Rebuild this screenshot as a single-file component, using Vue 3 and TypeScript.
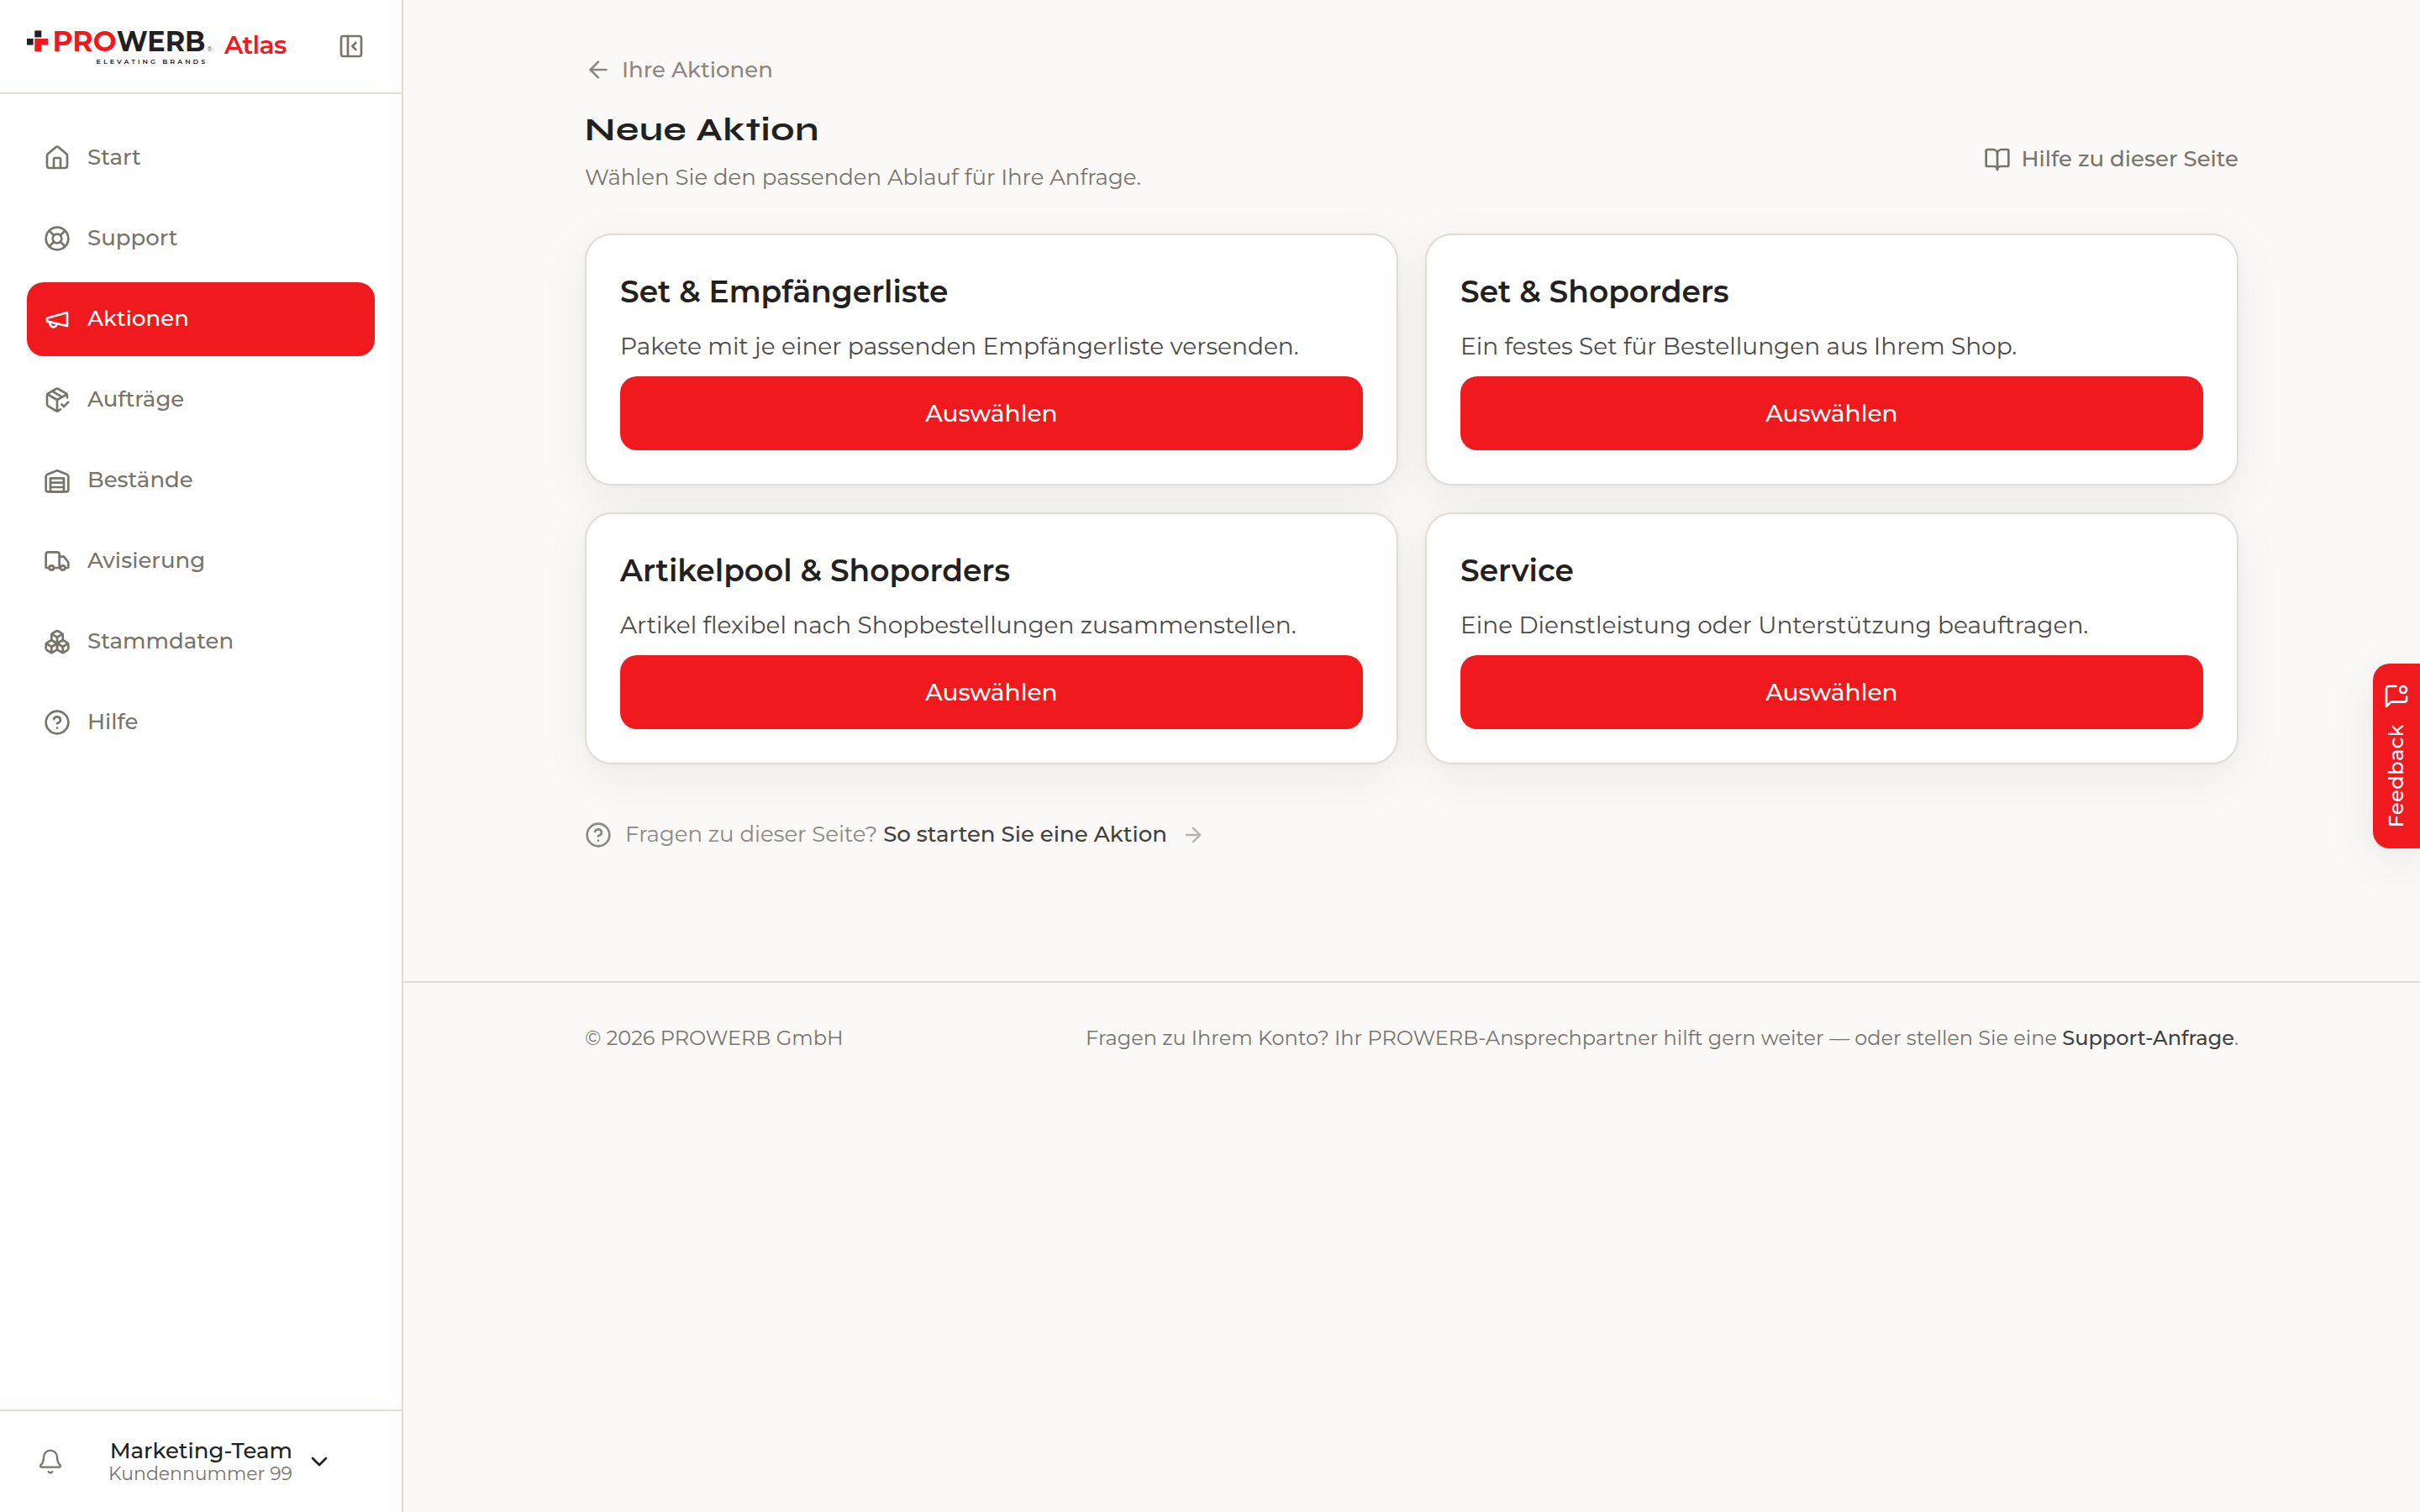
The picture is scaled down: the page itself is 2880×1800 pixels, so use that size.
<script setup lang="ts">
interface NavItem {
  label: string
  paths: string[]
  active?: boolean
}

interface Flow {
  title: string
  text: string
}

const circle = (cx: number, cy: number, r: number): string =>
  `M${cx - r} ${cy}a${r} ${r} 0 1 0 ${2 * r} 0a${r} ${r} 0 1 0 ${-2 * r} 0`

const helpIcon = [circle(12, 12, 10), 'M9.09 9a3 3 0 0 1 5.83 1c0 2-3 3-3 3', 'M12 17h.01']

const navItems: NavItem[] = [
  {
    label: 'Start',
    paths: [
      'M15 21v-8a1 1 0 0 0-1-1h-4a1 1 0 0 0-1 1v8',
      'M3 10a2 2 0 0 1 .709-1.528l7-5.999a2 2 0 0 1 2.582 0l7 5.999A2 2 0 0 1 21 10v9a2 2 0 0 1-2 2H5a2 2 0 0 1-2-2z',
    ],
  },
  {
    label: 'Support',
    paths: [
      circle(12, 12, 10),
      'm4.93 4.93 4.24 4.24',
      'm14.83 9.17 4.24-4.24',
      'm14.83 14.83 4.24 4.24',
      'm9.17 14.83-4.24 4.24',
      circle(12, 12, 4),
    ],
  },
  {
    label: 'Aktionen',
    active: true,
    paths: ['m3 11 18-5v12L3 14v-3z', 'M11.6 16.8a3 3 0 1 1-5.8-1.6'],
  },
  {
    label: 'Aufträge',
    paths: [
      'm16 16 2 2 4-4',
      'M21 10V8a2 2 0 0 0-1-1.73l-7-4a2 2 0 0 0-2 0l-7 4A2 2 0 0 0 3 8v8a2 2 0 0 0 1 1.73l7 4a2 2 0 0 0 2 0l2-1.14',
      'm7.5 4.27 9 5.15',
      'M3.29 7 12 12l8.71-5',
      'M12 22V12',
    ],
  },
  {
    label: 'Bestände',
    paths: [
      'M22 8.35V20a2 2 0 0 1-2 2H4a2 2 0 0 1-2-2V8.35A2 2 0 0 1 3.26 6.5l8-3.2a2 2 0 0 1 1.48 0l8 3.2A2 2 0 0 1 22 8.35Z',
      'M6 18h12',
      'M6 14h12',
      'M6 10h12v12H6z',
    ],
  },
  {
    label: 'Avisierung',
    paths: [
      'M14 18V6a2 2 0 0 0-2-2H4a2 2 0 0 0-2 2v11a1 1 0 0 0 1 1h2',
      'M15 18H9',
      'M19 18h2a1 1 0 0 0 1-1v-3.65a1 1 0 0 0-.22-.624l-3.48-4.35A1 1 0 0 0 17.52 8H14',
      circle(17, 18, 2),
      circle(7, 18, 2),
    ],
  },
  {
    label: 'Stammdaten',
    paths: [
      'M2.97 12.92A2 2 0 0 0 2 14.63v3.24a2 2 0 0 0 .97 1.71l3 1.8a2 2 0 0 0 2.06 0L12 19v-5.5l-5-3-4.03 2.42Z',
      'm7 16.5-4.74-2.85',
      'm7 16.5 5-3',
      'M7 16.5v5.17',
      'M12 13.5V19l3.97 2.38a2 2 0 0 0 2.06 0l3-1.8a2 2 0 0 0 .97-1.71v-3.24a2 2 0 0 0-.97-1.71L17 10.5l-5 3Z',
      'm17 16.5-5-3',
      'm17 16.5 4.74-2.85',
      'M17 16.5v5.17',
      'M7.97 4.42A2 2 0 0 0 7 6.13v4.37l5 3 5-3V6.13a2 2 0 0 0-.97-1.71l-3-1.8a2 2 0 0 0-2.06 0l-3 1.8Z',
      'M12 8 7.26 5.15',
      'm12 8 4.74-2.85',
      'M12 13.5V8',
    ],
  },
  { label: 'Hilfe', paths: helpIcon },
]

const flows: Flow[] = [
  { title: 'Set & Empfängerliste', text: 'Pakete mit je einer passenden Empfängerliste versenden.' },
  { title: 'Set & Shoporders', text: 'Ein festes Set für Bestellungen aus Ihrem Shop.' },
  { title: 'Artikelpool & Shoporders', text: 'Artikel flexibel nach Shopbestellungen zusammenstellen.' },
  { title: 'Service', text: 'Eine Dienstleistung oder Unterstützung beauftragen.' },
]
</script>

<template>
  <div class="app">
    <aside class="sidebar">
      <div class="brand">
        <svg class="logo" width="224" height="76" viewBox="0 -16 224 76">
          <g fill="#22211f">
            <rect x="9.3" y="2.4" width="8" height="8" />
            <rect x="0" y="12" width="7.6" height="7.6" />
          </g>
          <path fill="#f0191d" d="M9.3 12h15.7v7.6h-7.7v7.7h-8z" />
          <text x="30.4" y="27.3" class="word red" textLength="76.4" lengthAdjust="spacingAndGlyphs">PRO</text>
          <text x="106.8" y="27.3" class="word dark" textLength="105.6" lengthAdjust="spacingAndGlyphs">WERB</text>
          <text x="214.4" y="27.3" class="reg">®</text>
          <text x="82.6" y="42" class="claim" textLength="129.6" lengthAdjust="spacing">ELEVATING BRANDS</text>
        </svg>
        <span class="product">Atlas</span>
        <button class="toggle" type="button" aria-label="Seitenleiste einklappen">
          <svg class="icon" viewBox="0 0 24 24">
            <rect x="3" y="3" width="18" height="18" rx="2" />
            <path d="M9 3v18" />
            <path d="m16 15-3-3 3-3" />
          </svg>
        </button>
      </div>

      <nav class="nav">
        <a v-for="item in navItems" :key="item.label" class="nav-item" :class="{ active: item.active }">
          <svg class="icon" viewBox="0 0 24 24">
            <path v-for="d in item.paths" :key="d" :d="d" />
          </svg>
          <span>{{ item.label }}</span>
        </a>
      </nav>

      <div class="account">
        <svg class="icon bell" viewBox="0 0 24 24">
          <path d="M10.268 21a2 2 0 0 0 3.464 0" />
          <path d="M3.262 15.326A1 1 0 0 0 4 17h16a1 1 0 0 0 .74-1.673C19.41 13.956 18 12.499 18 8A6 6 0 0 0 6 8c0 4.499-1.411 5.956-2.738 7.326" />
        </svg>
        <div class="who">
          <span class="team">Marketing-Team</span>
          <span class="number">Kundennummer 99</span>
        </div>
        <svg class="icon chevron" viewBox="0 0 24 24"><path d="m6 9 6 6 6-6" /></svg>
      </div>
    </aside>

    <div class="page">
      <main class="content">
        <a class="back">
          <svg class="icon" viewBox="0 0 24 24">
            <path d="m12 19-7-7 7-7" />
            <path d="M19 12H5" />
          </svg>
          <span>Ihre Aktionen</span>
        </a>

        <header class="head">
          <div>
            <h1>Neue Aktion</h1>
            <p class="lead">Wählen Sie den passenden Ablauf für Ihre Anfrage.</p>
          </div>
          <a class="page-help">
            <svg class="icon" viewBox="0 0 24 24">
              <path d="M12 7v14" />
              <path d="M3 18a1 1 0 0 1-1-1V4a1 1 0 0 1 1-1h5a4 4 0 0 1 4 4 4 4 0 0 1 4-4h5a1 1 0 0 1 1 1v13a1 1 0 0 1-1 1h-6a3 3 0 0 0-3 3 3 3 0 0 0-3-3z" />
            </svg>
            <span>Hilfe zu dieser Seite</span>
          </a>
        </header>

        <section class="grid">
          <article v-for="flow in flows" :key="flow.title" class="card">
            <h2>{{ flow.title }}</h2>
            <p>{{ flow.text }}</p>
            <button class="choose" type="button">Auswählen</button>
          </article>
        </section>

        <div class="questions">
          <svg class="icon" viewBox="0 0 24 24">
            <path v-for="d in helpIcon" :key="d" :d="d" />
          </svg>
          <span class="ask">Fragen zu dieser Seite? <a class="how">So starten Sie eine Aktion</a></span>
          <svg class="icon go" viewBox="0 0 24 24">
            <path d="M5 12h14" />
            <path d="m12 5 7 7-7 7" />
          </svg>
        </div>
      </main>

      <footer class="footer">
        <span>© 2026 PROWERB GmbH</span>
        <span>Fragen zu Ihrem Konto? Ihr PROWERB-Ansprechpartner hilft gern weiter — oder stellen Sie eine <a>Support-Anfrage</a>.</span>
      </footer>
    </div>

    <button class="feedback" type="button">
      <svg class="icon" viewBox="0 0 24 24">
        <path d="M11.7 3H5a2 2 0 0 0-2 2v16l4-4h12a2 2 0 0 0 2-2v-2.7" />
        <circle cx="18" cy="6" r="3" />
      </svg>
      <span>Feedback</span>
    </button>
  </div>
</template>

<style>
body {
  background: #faf9f7;
}
</style>

<style scoped>
.app {
  display: flex;
  height: 1800px;
  font-family: Montserrat, Inter, sans-serif;
  font-size: 26px;
  color: #232120;
  background: #faf9f7;
}
.app * {
  box-sizing: border-box;
}
h1,
h2,
p {
  margin: 0;
}
button {
  border: 0;
  padding: 0;
  background: none;
  font: inherit;
  color: inherit;
}
span,
a {
  white-space: nowrap;
}
.icon {
  flex: none;
  display: block;
  width: 32px;
  height: 32px;
  fill: none;
  stroke: currentColor;
  stroke-width: 2;
  stroke-linecap: round;
  stroke-linejoin: round;
}

/* Sidebar */
.sidebar {
  flex: none;
  display: flex;
  flex-direction: column;
  width: 480px;
  border-right: 2px solid #e2dcd6;
  background: #fff;
}
.brand {
  flex: none;
  display: flex;
  align-items: center;
  height: 112px;
  padding: 0 44px 0 32px;
  border-bottom: 2px solid #e2dcd6;
}
.logo {
  display: block;
  margin-top: 2px;
}
.word {
  font-size: 35px;
  font-weight: 700;
}
.word.red {
  fill: #f0191d;
}
.word.dark {
  fill: #22211f;
}
.reg {
  font-size: 7px;
  fill: #22211f;
}
.claim {
  font-size: 8px;
  font-weight: 600;
  fill: #22211f;
}
.product {
  margin-left: 11px;
  font-size: 30px;
  font-weight: 600;
  letter-spacing: -0.75px;
  line-height: 40px;
  margin-top: -2px;
  color: #f0191d;
}
.toggle {
  margin-left: auto;
  color: #78746a;
}
.nav {
  flex: 1;
  display: flex;
  flex-direction: column;
  gap: 8px;
  padding: 32px;
}
.nav-item {
  display: flex;
  align-items: center;
  gap: 20px;
  height: 88px;
  padding: 0 20px;
  border-radius: 20px;
  font-weight: 500;
  line-height: 36px;
  color: #78746a;
}
.nav-item span {
  padding-bottom: 2px;
}
.nav-item.active {
  color: #fff;
  background: #f0191d;
  box-shadow: 0 2px 6px rgba(34, 32, 28, 0.06);
}
.account {
  flex: none;
  display: flex;
  align-items: center;
  height: 122px;
  padding-left: 44px;
  border-top: 2px solid #e2dcd6;
}
.bell {
  stroke-width: 1.75;
  color: #78746a;
}
.who {
  display: flex;
  flex-direction: column;
  align-items: flex-end;
  margin-left: 53px;
}
.team {
  font-weight: 500;
  line-height: 28px;
}
.number {
  padding-top: 1px;
  font-size: 22px;
  line-height: 26px;
  color: #78746a;
}
.chevron {
  margin-left: 16px;
}

/* Page */
.page {
  flex: 1;
  min-width: 0;
}
.content {
  padding: 64px 216px 0;
}
.back {
  display: flex;
  align-items: center;
  gap: 12px;
  height: 38px;
  font-weight: 500;
  line-height: 36px;
  color: #8c8782;
}
.head {
  display: flex;
  justify-content: space-between;
  align-items: flex-end;
  height: 130px;
  margin-bottom: 46px;
}
h1 {
  font-family: Syne, Montserrat, Inter, sans-serif;
  height: 48px;
  font-size: 40px;
  font-weight: 700;
  line-height: 48px;
  letter-spacing: 0.9px;
}
.lead {
  margin-top: 13px;
  margin-bottom: 1px;
  line-height: 40px;
  color: #78746a;
}
.page-help {
  display: flex;
  align-items: center;
  gap: 12px;
  height: 84px;
  font-weight: 500;
  line-height: 36px;
  color: #78746a;
}
.page-help span {
  padding-bottom: 2px;
}
.grid {
  display: grid;
  grid-template-columns: 1fr 1fr;
  gap: 32px;
}
.card {
  height: 300px;
  padding: 40px;
  border: 2px solid #e2dcd6;
  border-radius: 32px;
  background: #fff;
  box-shadow: 0 2px 8px rgba(34, 32, 28, 0.03), 0 16px 60px rgba(34, 32, 28, 0.06);
}
h2 {
  font-size: 36px;
  font-weight: 600;
  line-height: 55px;
}
.card p {
  margin: 15px 0 14px;
  font-size: 28px;
  line-height: 44px;
  color: #4c4a48;
}
.choose {
  display: block;
  width: 100%;
  height: 88px;
  border-radius: 20px;
  font-size: 28px;
  font-weight: 500;
  color: #fff;
  background: #f0191d;
  box-shadow: 0 2px 6px rgba(34, 32, 28, 0.06);
}
.questions {
  display: flex;
  align-items: center;
  height: 56px;
  margin-top: 56px;
  line-height: 36px;
  color: #8c8782;
}
.ask {
  margin-left: 16px;
  padding-bottom: 2px;
}
.how {
  font-weight: 500;
  color: #44403c;
}
.go {
  width: 28px;
  height: 28px;
  margin-left: 17px;
  color: #b5b2ad;
}
.footer {
  display: flex;
  justify-content: space-between;
  margin-top: 146px;
  padding: 46px 216px 0;
  border-top: 2px solid #e2dcd6;
  font-size: 24px;
  line-height: 40px;
  color: #78746a;
}
.footer a {
  font-weight: 500;
  color: #44403c;
}

/* Tab pinned to the right window edge */
.feedback {
  position: absolute;
  top: 790px;
  right: 0;
  display: flex;
  flex-direction: column;
  align-items: center;
  gap: 17px;
  width: 56px;
  height: 220px;
  padding-top: 23px;
  border-radius: 20px 0 0 20px;
  font-size: 24px;
  font-weight: 500;
  color: #fff;
  background: #f0191d;
  box-shadow: 0 2px 8px rgba(34, 32, 28, 0.03), 0 16px 60px rgba(34, 32, 28, 0.07);
}
.feedback span {
  writing-mode: vertical-rl;
  transform: rotate(180deg);
  letter-spacing: 0.48px;
  line-height: 32px;
}
</style>
